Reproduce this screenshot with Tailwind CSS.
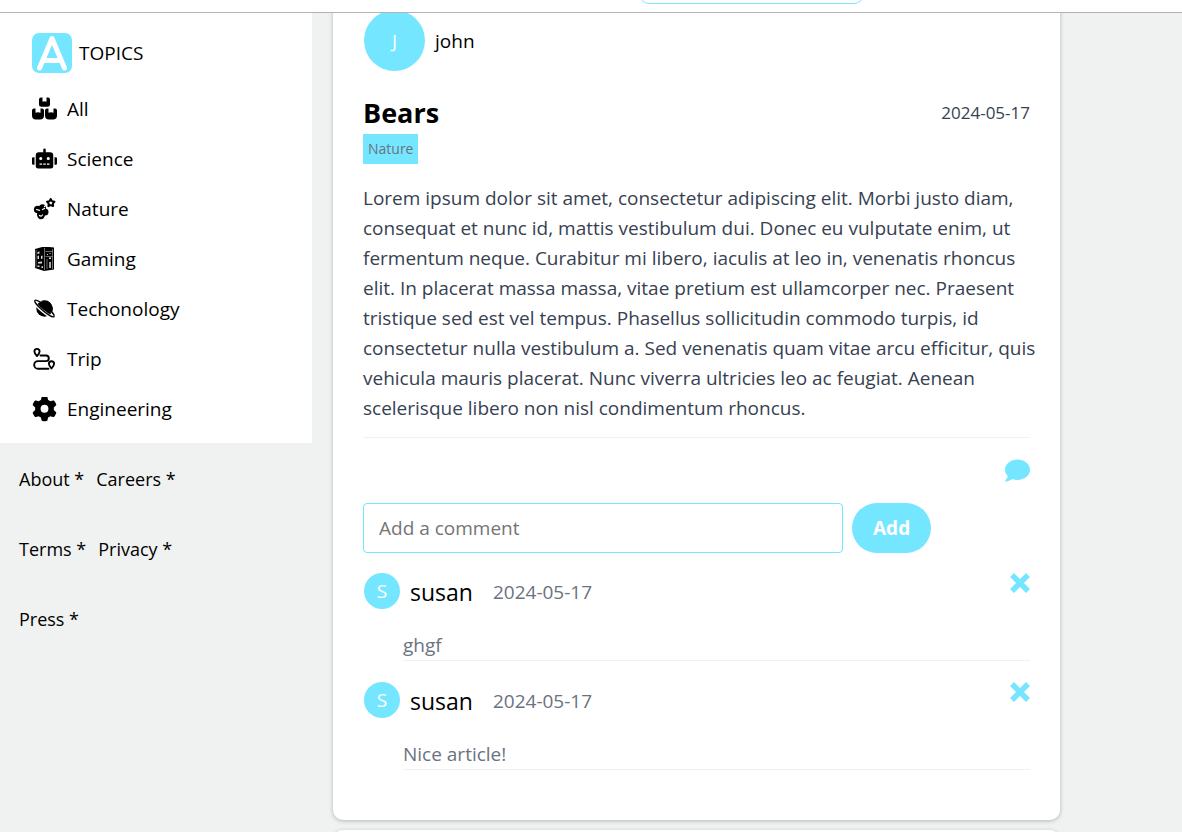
<!DOCTYPE html>
<html lang="en">
<head>
<meta charset="utf-8">
<title>Bears</title>
<script src="https://cdn.jsdelivr.net/npm/@tailwindcss/browser@4"></script>
</head>
<body class="h-screen overflow-hidden flex flex-col bg-[#f0f2f1] font-['Open_Sans',sans-serif] text-[19px] leading-[30px] text-black">
<header class="h-[13px] shrink-0 overflow-hidden border-b border-[#b3b3b3] bg-white flex items-end pl-[639px] pb-2">
  <input type="search" aria-label="Search" class="h-10 w-[225px] shrink-0 rounded-[10px] border border-[#75e6ff] px-3 outline-none">
</header>
<main class="flex-1 min-h-0 overflow-hidden flex items-start gap-[21px]">
  <aside class="w-[312px] shrink-0">
    <nav class="bg-white px-8 pt-5 pb-[9px]" aria-label="Topics">
      <h2 class="flex items-center gap-[7px] mb-[11px]">
        <svg class="size-10" viewBox="0 0 40 40"><rect width="40" height="40" rx="7" fill="#75e6ff"/><path d="M7.500 35 L20 5.500 L32.500 35 M12 27.500 H28" fill="none" stroke="#fff" stroke-width="5" stroke-linecap="round" stroke-linejoin="round"/></svg>
        TOPICS
      </h2>
      <ul>
        <li><a href="#" class="flex h-[50px] items-center gap-[10px]">
          <svg class="size-[25px]" viewBox="0 0 25 25"><path d="M9 .5h1.500v4.300q2-1 4 0V.5H16q2 0 2 2v4.800q0 2.500-2.500 2.500h-6Q7 9.800 7 7.300V2.500q0-2 2-2zM2 11.500h1.500v4.300q2.500-1.200 5 0v-4.300H10q2 0 2 2v5q0 4-4 4H4q-4 0-4-4v-5q0-2 2-2zM15 11.500h1.500v4.300q2.500-1.200 5 0v-4.300H23q2 0 2 2v5q0 4-4 4h-4q-4 0-4-4v-5q0-2 2-2z"/></svg>All</a></li>
        <li><a href="#" class="flex h-[50px] items-center gap-[10px]">
          <svg class="size-[25px]" viewBox="0 25 640 512"><path d="M32 224h32v192H32a32 32 0 0 1-32-32V256a32 32 0 0 1 32-32zm512-48v272a64 64 0 0 1-64 64H160a64 64 0 0 1-64-64V176a80 80 0 0 1 80-80h112V32a32 32 0 0 1 64 0v64h112a80 80 0 0 1 80 80zM264 256a40 40 0 1 0-80 0 40 40 0 1 0 80 0zm-8 128h-64v32h64zm96 0h-64v32h64zm104-128a40 40 0 1 0-80 0 40 40 0 1 0 80 0zm-8 128h-64v32h64zm192-128v128a32 32 0 0 1-32 32h-32V224h32a32 32 0 0 1 32 32z"/></svg>Science</a></li>
        <li><a href="#" class="flex h-[50px] items-center gap-[10px]">
          <svg class="size-[25px]" viewBox="0 0 25 25"><path d="M18.700 2l1.300 2.200 2.500.5-1.700 1.900.3 2.500-2.400-1-2.300 1 .3-2.500L15 4.700l2.500-.5z" fill="#fff" stroke="#000" stroke-width="2" stroke-linejoin="round"/><circle cx="5.700" cy="12.500" r="3.800"/><circle cx="10.500" cy="10.800" r="3.500"/><circle cx="13" cy="15" r="3.500"/><ellipse cx="9" cy="17.500" rx="4" ry="4.800"/><path d="M12.500 9.500l2-1.700M4.500 12.500l3 .8M10.500 12.500l2-1M7.500 18.500q1.500 1.500 3-.5" fill="none" stroke="#fff" stroke-width="1.200" stroke-linecap="round"/></svg>Nature</a></li>
        <li><a href="#" class="flex h-[50px] items-center gap-[10px]">
          <svg class="size-[25px]" viewBox="0 1 25 25"><path d="M3 3L12 .500l10 1v22L12 25l-9-3z"/><path d="M12.500 2v22M4 4v17.500M13.500 5.500h7.500M13.500 10.500h7.500M20.500 3v20M15 13v10" stroke="#999" stroke-width=".7"/><path d="M5.500 6l2-.5v2l-2 .5zM5.500 10l1.500-.5V13H5.500zM9 10l1.500-.5v3L9 13zM6 16l4-.5v2H6zM5.500 19.500h2v1.500h-2zM9.500 20l1.500.500V22H9.500zM15 8h1v1h-1zM17.500 7h1v1h-1zM17 11.500h2v1.500h-2zM17.300 16h1.500v6h-1.500z" fill="#ddd"/></svg>Gaming</a></li>
        <li><a href="#" class="flex h-[50px] items-center gap-[10px]">
          <svg class="size-[25px]" viewBox="0 1 25 25"><circle cx="12.500" cy="12.500" r="8.200"/><ellipse cx="12.500" cy="12.500" rx="13" ry="3.200" transform="rotate(40 12.500 12.500)" fill="none" stroke="#fff" stroke-width="3"/><ellipse cx="12.500" cy="12.500" rx="12.500" ry="2.600" transform="rotate(40 12.500 12.500)" fill="none" stroke="#000" stroke-width="1.400"/><path d="M6.500 7.500a8.200 8.200 0 0 1 13.500 9Q12 13.500 6.500 7.500z"/></svg>Techonology</a></li>
        <li><a href="#" class="flex h-[50px] items-center gap-[10px]">
          <svg class="size-[25px]" viewBox="0 0 25 25" fill="none" stroke="#000" stroke-width="1.900" stroke-linecap="round"><path d="M5 9Q2.400 6.200 2.400 4.500a2.600 2.600 0 0 1 5.200 0Q7.600 6.200 5 9zM19.500 21.500Q16.900 18.500 16.900 16.800a2.600 2.600 0 0 1 5.200 0Q22.100 18.500 19.500 21.500zM8.500 8.500h5.500a2.800 2.800 0 0 1 0 5.600H6a3.800 3.800 0 0 0 0 7.600h10.500" stroke-linejoin="round"/></svg>Trip</a></li>
        <li><a href="#" class="flex h-[50px] items-center gap-[10px]">
          <svg class="size-[25px]" viewBox="0 15 512 512"><path d="M495.900 166.600c3.200 8.700 .5 18.400-6.400 24.600l-43.300 39.400c1.100 8.300 1.700 16.800 1.700 25.400s-.6 17.100-1.700 25.400l43.300 39.400c6.900 6.200 9.600 15.900 6.400 24.600c-4.400 11.900-9.700 23.300-15.800 34.300l-4.700 8.100c-6.600 11-14 21.400-22.100 31.200c-5.900 7.200-15.700 9.600-24.500 6.800l-55.700-17.700c-13.400 10.300-28.200 18.900-44 25.400l-12.500 57.100c-2 9.100-9 16.300-18.200 17.800c-13.800 2.300-28 3.500-42.500 3.500s-28.700-1.200-42.500-3.500c-9.200-1.500-16.200-8.700-18.200-17.800l-12.500-57.100c-15.800-6.500-30.600-15.100-44-25.400L83.100 425.900c-8.800 2.800-18.600 .3-24.500-6.800c-8.100-9.800-15.500-20.200-22.100-31.200l-4.700-8.100c-6.100-11-11.400-22.400-15.800-34.300c-3.200-8.700-.5-18.400 6.400-24.600l43.300-39.400C64.600 273.100 64 264.600 64 256s.6-17.100 1.700-25.400L22.400 191.200c-6.900-6.200-9.600-15.900-6.400-24.600c4.400-11.900 9.700-23.300 15.800-34.300l4.700-8.100c6.600-11 14-21.400 22.100-31.200c5.900-7.200 15.700-9.600 24.500-6.800l55.700 17.700c13.400-10.300 28.200-18.900 44-25.400l12.500-57.100c2-9.100 9-16.300 18.200-17.800C227.300 1.200 241.500 0 256 0s28.700 1.200 42.500 3.500c9.200 1.500 16.200 8.700 18.200 17.800l12.500 57.100c15.800 6.500 30.600 15.100 44 25.400l55.700-17.700c8.800-2.800 18.600-.3 24.500 6.800c8.100 9.800 15.500 20.200 22.100 31.200l4.700 8.100c6.100 11 11.400 22.400 15.800 34.300zM256 336a80 80 0 1 0 0-160 80 80 0 1 0 0 160z"/></svg>Engineering</a></li>
      </ul>
    </nav>
    <footer class="px-[19px] pt-[21px] flex flex-col gap-10 text-[18px]">
      <div class="flex gap-3"><a href="#">About *</a><a href="#">Careers *</a></div>
      <div class="flex gap-3"><a href="#">Terms *</a><a href="#">Privacy *</a></div>
      <div class="flex gap-3"><a href="#">Press *</a></div>
    </footer>
  </aside>
  <div class="flex-1 min-w-0 mr-[122px] -mt-[33px] flex flex-col gap-[10px]">
    <article class="rounded-[10px] bg-white px-[30px] pt-[30px] pb-[50px] shadow-[0_1px_4px_rgba(0,0,0,0.25)]">
      <div class="flex items-center gap-[10px]">
        <span class="size-[61px] rounded-full bg-[#75e6ff] text-white flex items-center justify-center ml-px">J</span>
        <span>john</span>
      </div>
      <div class="mt-[27px] flex items-start justify-between pb-[6px]">
        <h1 class="text-[27px] leading-[30px] font-bold">Bears</h1>
        <time class="text-[17px] text-[#374151]">2024-05-17</time>
      </div>
      <span class="inline-block align-top bg-[#75e6ff] px-[5px] h-[30px] text-[14px] text-[#6b7280]">Nature</span>
      <p class="mt-[19px] -mr-3 text-[#374151]">Lorem ipsum dolor sit amet, consectetur adipiscing elit. Morbi justo diam, consequat et nunc id, mattis vestibulum dui. Donec eu vulputate enim, ut fermentum neque. Curabitur mi libero, iaculis at leo in, venenatis rhoncus elit. In placerat massa massa, vitae pretium est ullamcorper nec. Praesent tristique sed est vel tempus. Phasellus sollicitudin commodo turpis, id consectetur nulla vestibulum a. Sed venenatis quam vitae arcu efficitur, quis vehicula mauris placerat. Nunc viverra ultricies leo ac feugiat. Aenean scelerisque libero non nisl condimentum rhoncus.</p>
      <hr class="mt-[14px] border-[#f0f2f1]">
      <div class="flex justify-end mt-5">
        <button type="button" aria-label="Comments"><svg class="size-[25px] block" viewBox="0 0 512 512" fill="#75e6ff"><path d="M256 32C114.600 32 0 125.100 0 240c0 49.600 21.400 95 57 130.700C44.500 421.100 2.700 466 2.200 466.500c-2.200 2.300-2.800 5.700-1.500 8.700S4.800 480 8 480c66.300 0 116-31.800 140.600-51.400 32.700 12.300 69 19.400 107.400 19.400 141.400 0 256-93.100 256-208S397.400 32 256 32z"/></svg></button>
      </div>
      <form class="mt-5 flex gap-[9px]">
        <input type="text" aria-label="Add a comment" placeholder="Add a comment" class="h-[50px] w-[480px] rounded-[4px] border border-[#75e6ff] px-[15px] placeholder:text-[#757575]">
        <button type="button" class="h-[50px] rounded-full bg-[#75e6ff] px-[21px] font-bold text-white">Add</button>
      </form>
      <section class="mt-5">
        <div class="flex items-start">
          <span class="size-9 rounded-full bg-[#75e6ff] text-white flex items-center justify-center ml-px">S</span>
          <span class="ml-[10px] text-[23px] leading-[38px]">susan</span>
          <time class="ml-5 leading-[38px] text-[#6b7280]">2024-05-17</time>
          <button type="button" aria-label="Delete comment" class="ml-auto"><svg class="size-5 block" viewBox="0 0 20 20"><path d="M2 2l16 16M18 2L2 18" stroke="#75e6ff" stroke-width="5.500"/></svg></button>
        </div>
        <p class="ml-10 mt-5 border-b border-[#f0f2f1] text-[#6b7280] leading-[29px]">ghgf</p>
      </section>
      <section class="mt-[21px]">
        <div class="flex items-start">
          <span class="size-9 rounded-full bg-[#75e6ff] text-white flex items-center justify-center ml-px">S</span>
          <span class="ml-[10px] text-[23px] leading-[38px]">susan</span>
          <time class="ml-5 leading-[38px] text-[#6b7280]">2024-05-17</time>
          <button type="button" aria-label="Delete comment" class="ml-auto"><svg class="size-5 block" viewBox="0 0 20 20"><path d="M2 2l16 16M18 2L2 18" stroke="#75e6ff" stroke-width="5.500"/></svg></button>
        </div>
        <p class="ml-10 mt-5 border-b border-[#f0f2f1] text-[#6b7280] leading-[29px]">Nice article!</p>
      </section>
    </article>
    <article class="h-40 rounded-[10px] bg-white shadow-[0_1px_4px_rgba(0,0,0,0.25)]"></article>
  </div>
</main>
</body>
</html>
